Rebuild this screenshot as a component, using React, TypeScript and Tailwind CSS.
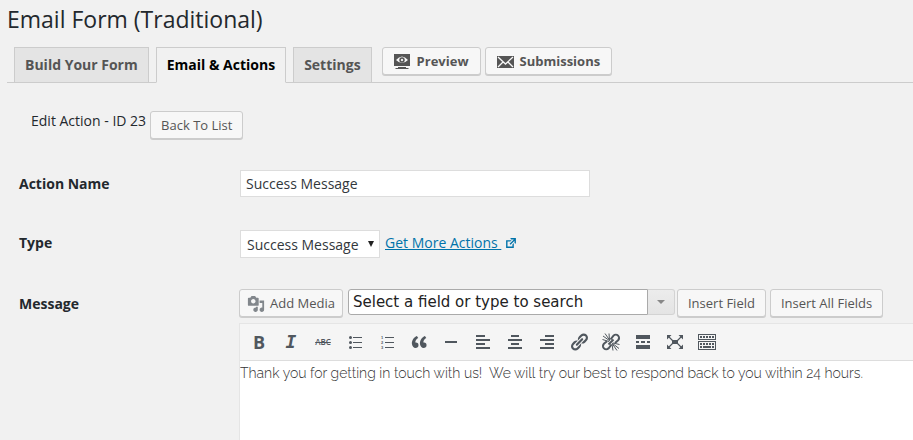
import type { ReactNode } from "react";

const sans = "font-['Open_Sans','Noto_Sans',sans-serif]";

function Icon({ d, className = "" }: { d: string; className?: string }) {
  return (
    <svg viewBox="0 0 20 20" aria-hidden="true" className={`shrink-0 fill-current ${className}`}>
      <path d={d} fillRule="evenodd" />
    </svg>
  );
}

function Button({ children, className = "px-[10px] text-[13px]" }: { children: ReactNode; className?: string }) {
  return (
    <button
      type="button"
      className={`flex h-7 shrink-0 items-center whitespace-nowrap rounded-[3px] border border-[#ccc] bg-[#f7f7f7] pt-px text-[#555] shadow-[0_1px_0_#ccc] ${className}`}
    >
      {children}
    </button>
  );
}

function Tab({ label, active = false }: { label: string; active?: boolean }) {
  return (
    <a
      href="#"
      aria-current={active ? "page" : undefined}
      className={`block whitespace-nowrap border border-[#ccc] px-[10px] py-[5px] text-[14px] leading-6 font-bold ${
        active ? "-mb-px border-b-[#f1f1f1] bg-[#f1f1f1] text-black" : "border-b-0 bg-[#e4e4e4] text-[#555]"
      }`}
    >
      {label}
    </a>
  );
}

function MonitorEye() {
  return (
    <svg viewBox="0 0 16 16" aria-hidden="true" className="size-4 shrink-0 fill-current">
      <path fillRule="evenodd" d="M0 0h16v12H0zM2 6q6-7 12 0q-6 6-12 0z" />
      <path fillRule="evenodd" d="M8 3.200a2.800 2.800 0 1 0 .01 0zM8 4.800a1.200 1.200 0 1 1-.01 0z" />
      <path d="M4 13h8v1H4zM1.500 14h13v1h-13z" />
    </svg>
  );
}

function Envelope() {
  return (
    <svg viewBox="0 0 17 12" aria-hidden="true" className="h-3 w-[17px] shrink-0">
      <path className="fill-current" d="M0 0h17v12H0z" />
      <path className="fill-none stroke-[#f7f7f7]" strokeWidth="1.300" d="M1 1l7.500 7L16 1M1 11l5-5M16 11l-5-5" />
    </svg>
  );
}

const MEDIA =
  "M13 11V4c0-.55-.45-1-1-1h-1.670L9 1H5L3.670 3H2c-.55 0-1 .45-1 1v7c0 .55.45 1 1 1h10c.55 0 1-.45 1-1zM7 4.500c1.380 0 2.500 1.120 2.500 2.500S8.380 9.500 7 9.500 4.500 8.380 4.500 7 5.620 4.500 7 4.500zM14 6h5v10.500c0 1.380-1.120 2.500-2.500 2.500S14 17.880 14 16.500s1.120-2.500 2.500-2.500c.17 0 .34.02.5.05V9h-3V6zm-4 8.050V13h2v3.500c0 1.380-1.120 2.500-2.500 2.500S7 17.880 7 16.500 8.120 14 9.500 14c.17 0 .34.02.5.05z";
const EXTERNAL = "M9 3h8v8l-2-1V6.920l-5.600 5.590-1.410-1.410L14.080 5H10zm3 12v-3l2-2v7H3V6h8L9 8H5v7h7z";
const LIST =
  "M5.500 7a1.500 1.500 0 1 1 0-3 1.500 1.500 0 0 1 0 3zM8 5h9v1H8zM5.500 12a1.500 1.500 0 1 1 0-3 1.500 1.500 0 0 1 0 3zM8 10h9v1H8zM5.500 17a1.500 1.500 0 1 1 0-3 1.500 1.500 0 0 1 0 3zM8 15h9v1H8z";
const QUOTE =
  "M9.490 13.220c0-.74-.2-1.380-.61-1.900-.62-.78-1.830-.88-2.530-.72-.29-1.650 1.110-3.750 2.920-4.650L7.880 4c-2.730 1.300-5.420 4.280-4.960 8.050C3.210 14.430 4.590 16 6.540 16c.85 0 1.560-.25 2.120-.75s.83-1.180.83-2.030zm8.050 0c0-.74-.2-1.380-.61-1.900-.63-.78-1.830-.88-2.530-.72-.29-1.650 1.110-3.750 2.920-4.650L15.930 4c-2.730 1.300-5.410 4.280-4.950 8.050.29 2.380 1.660 3.950 3.610 3.950.85 0 1.560-.25 2.120-.75s.83-1.180.83-2.030z";
const LINK =
  "M17.740 2.760c1.680 1.690 1.680 4.410 0 6.100l-1.530 1.520c-1.120 1.120-2.700 1.470-4.140 1.090l2.620-2.610.76-.77.76-.76c.84-.84.84-2.200 0-3.040-.84-.85-2.200-.85-3.040 0l-.77.76-3.380 3.380c-.37-1.440-.02-3.020 1.100-4.140l1.520-1.530c1.690-1.680 4.420-1.680 6.100 0zM8.590 13.430l5.340-5.340c.42-.42.42-1.100 0-1.520-.44-.43-1.130-.39-1.530 0l-5.330 5.340c-.42.42-.42 1.100 0 1.520.44.43 1.130.39 1.520 0zm-.76 2.290l4.140-4.150c.38 1.440.03 3.020-1.090 4.140l-1.520 1.530c-1.690 1.680-4.410 1.680-6.100 0-1.680-1.680-1.680-4.420 0-6.100l1.530-1.520c1.120-1.120 2.700-1.470 4.140-1.100l-4.140 4.150c-.85.84-.85 2.200 0 3.050.84.84 2.200.84 3.040 0z";

const tools: { name: string; icon: ReactNode }[] = [
  { name: "Bold", icon: <span className="text-[18px] leading-5 font-bold">B</span> },
  { name: "Italic", icon: <span className="font-['DejaVu_Sans_Mono',monospace] text-[18px] leading-5 font-bold italic">I</span> },
  { name: "Strikethrough", icon: <span className="text-[8px] leading-5 font-semibold line-through">ABC</span> },
  { name: "Bulleted list", icon: <Icon className="size-5" d={LIST} /> },
  {
    name: "Numbered list",
    icon: (
      <svg viewBox="0 0 20 20" aria-hidden="true" className="size-5 fill-current font-['Liberation_Sans',sans-serif] text-[4px] font-bold">
        <path d="M8 5h9v1H8zM8 10h9v1H8zM8 15h9v1H8z" />
        <text x="4" y="7">1</text>
        <text x="4" y="12">2</text>
        <text x="4" y="17">3</text>
      </svg>
    ),
  },
  { name: "Blockquote", icon: <Icon className="size-5" d={QUOTE} /> },
  { name: "Horizontal line", icon: <Icon className="size-5" d="M4 9h12v2H4z" /> },
  { name: "Align left", icon: <Icon className="size-5" d="M3 3h9v2H3zM3 7h14v2H3zM3 11h9v2H3zM3 15h14v2H3z" /> },
  { name: "Align center", icon: <Icon className="size-5" d="M6 3h8v2H6zM3 7h14v2H3zM6 11h8v2H6zM3 15h14v2H3z" /> },
  { name: "Align right", icon: <Icon className="size-5" d="M8 3h9v2H8zM3 7h14v2H3zM8 11h9v2H8zM3 15h14v2H3z" /> },
  { name: "Insert link", icon: <Icon className="size-5" d={LINK} /> },
  {
    name: "Remove link",
    icon: (
      <svg viewBox="0 0 20 20" aria-hidden="true" className="size-5 fill-none stroke-current">
        <path strokeWidth="2" d="M9.500 7.500 12.500 3.600a3.200 3.200 0 0 1 4.600 4.600L14 11M10.500 12.500 7.600 16.300a3.200 3.200 0 0 1-4.700-4.600L6 9.200M12.500 7.500l-5 5" />
        <path strokeWidth="1" d="M9 9 2 4M8.500 8 4 1.500M8.500 8 8 1.500M8 9.500 1.500 7.500M11 11l7 5.500M11.500 12l4.500 6.500M12 11l6.500 1.500M11 12l1 6.500" />
      </svg>
    ),
  },
  { name: "Read more tag", icon: <Icon className="size-5" d="M3 3h14v4H3zM3 9h3v2H3zM8 9h4v2H8zM14 9h3v2h-3zM3 13h14v4H3z" /> },
  {
    name: "Fullscreen",
    icon: (
      <svg viewBox="0 0 20 20" aria-hidden="true" className="size-5 fill-current stroke-current">
        <path stroke="none" d="M7 8h6v4H7zM2 3h4.500L2 7.500zM18 3h-4.500L18 7.500zM2 17h4.500L2 12.500zM18 17h-4.500l4.500-4.500z" />
        <path fill="none" strokeWidth="1.200" d="M3 4l4.500 4.500M17 4l-4.500 4.500M3 16l4.500-4.500M17 16l-4.500-4.500" />
      </svg>
    ),
  },
  {
    name: "Toolbar toggle",
    icon: (
      <Icon
        className="size-5"
        d="M1 2h18v6H1zM2 3v4h16V3zM3 4h2v2H3zM6 4h2v2H6zM9 4h2v2H9zM12 4h2v2h-2zM15 4h2v2h-2zM1 9h18v9H1zM2 10v7h16v-7zM3 11h2v2H3zM6 11h2v2H6zM9 11h2v2H9zM12 11h2v2h-2zM15 11h2v2h-2zM3 14h2v2H3zM6 14h8v2H6zM15 14h2v2h-2z"
      />
    ),
  },
];

export default function App() {
  return (
    <main className={`flex min-h-screen flex-col overflow-x-hidden bg-[#f1f1f1] pl-[7px] pt-[5px] text-[14px] text-[#23282d] ${sans}`}>
      <h1 className="text-[23px] leading-[29px] font-normal">Email Form (Traditional)</h1>

      <nav aria-label="Form sections" className="mt-[13px] flex h-[36px] items-start gap-[7px] border-b border-[#ccc] pl-[7px]">
        <Tab label="Build Your Form" />
        <Tab label="Email &amp; Actions" active />
        <Tab label="Settings" />
        <div className="ml-[3px] flex gap-1">
          <Button className="gap-[7px] px-[11px] text-[13px] font-bold">
            <MonitorEye />
            Preview
          </Button>
          <Button className="gap-[6px] px-[11px] text-[13px] font-bold">
            <Envelope />
            Submissions
          </Button>
        </div>
      </nav>

      <div className="mt-[28px] flex items-start gap-1 pl-6">
        <h2 className="leading-5">Edit Action - ID 23</h2>
        <Button>Back To List</Button>
      </div>

      <form className="mt-[31px] grid grow grid-cols-[221px_minmax(0,1fr)] grid-rows-[60px_59px_1fr] pl-3">
        <label htmlFor="action-name" className="pt-1 leading-5 font-bold">Action Name</label>
        <div>
          <input
            id="action-name"
            type="text"
            defaultValue="Success Message"
            className="h-[27px] w-[350px] max-w-full border border-[#ddd] bg-white px-[5px] text-[#32373c] outline-none"
          />
        </div>

        <label htmlFor="action-type" className="pt-[3px] leading-5 font-bold">Type</label>
        <div className="flex items-start gap-[5px]">
          <div className="grid w-[140px] shrink-0 items-center">
            <select
              id="action-type"
              defaultValue="success"
              className="col-start-1 row-start-1 h-7 w-full appearance-none border border-[#ddd] bg-white pl-[6px] text-[#32373c] outline-none"
            >
              <option value="success">Success Message</option>
              <option value="email">Email</option>
              <option value="redirect">Redirect</option>
            </select>
            <svg viewBox="0 0 6 6" aria-hidden="true" className="pointer-events-none col-start-1 row-start-1 mr-[6px] size-[6px] justify-self-end fill-[#222]">
              <path d="M0 0h6L3 6z" />
            </svg>
          </div>
          <a href="#" className="flex items-center gap-[3px] whitespace-pre pt-[3px] leading-5 text-[#0073aa]">
            <span className="underline">Get More Actions </span>
            <Icon className="size-[14px]" d={EXTERNAL} />
          </a>
        </div>

        <label htmlFor="message" className="pt-[5px] leading-5 font-bold">Message</label>
        <div className="-ml-px flex flex-col">
          <div className="flex items-start">
            <Button className="gap-[5px] px-[7px] text-[13px]">
              <Icon className="size-[18px] text-[#82878c]" d={MEDIA} />
              Add Media
            </Button>
            <div className="ml-[5px] flex h-[26px] w-[327px] shrink-0">
              <input
                aria-label="Field"
                type="text"
                defaultValue="Select a field or type to search"
                className="min-w-0 grow rounded-l-[3px] border border-[#aaa] bg-white px-1 pt-px font-['DejaVu_Sans',Verdana,sans-serif] text-[15px] text-[#222] outline-none"
              />
              <button
                type="button"
                aria-label="Show fields"
                className="flex w-[27px] items-center justify-center rounded-r-[3px] border border-l-0 border-[#d3d3d3] bg-linear-to-b from-[#ececec] to-[#e4e4e4]"
              >
                <svg viewBox="0 0 8 4" aria-hidden="true" className="h-1 w-2 fill-[#888]">
                  <path d="M0 0h8L4 4z" />
                </svg>
              </button>
            </div>
            <div className="ml-[2px] flex gap-1">
              <Button>Insert Field</Button>
              <Button>Insert All Fields</Button>
            </div>
          </div>

          <div className="mt-[6px] flex grow flex-col border border-r-0 border-b-0 border-[#e5e5e5] bg-white">
            <div role="toolbar" aria-label="Formatting" className="flex h-[37px] items-center gap-1 border-b border-[#ddd] bg-[#f5f5f5] pl-[5px] text-[#50575e]">
              {tools.map((tool) => (
                <button key={tool.name} type="button" aria-label={tool.name} className="flex size-7 shrink-0 items-center justify-center">
                  {tool.icon}
                </button>
              ))}
            </div>
            <textarea
              id="message"
              defaultValue="Thank you for getting in touch with us!  We will try our best to respond back to you within 24 hours."
              className="block w-full grow resize-none bg-white pt-[2px] font-['Raleway','Lato',sans-serif] text-[14px] leading-5 font-light text-[#333] outline-none"
            />
          </div>
        </div>
      </form>
    </main>
  );
}
